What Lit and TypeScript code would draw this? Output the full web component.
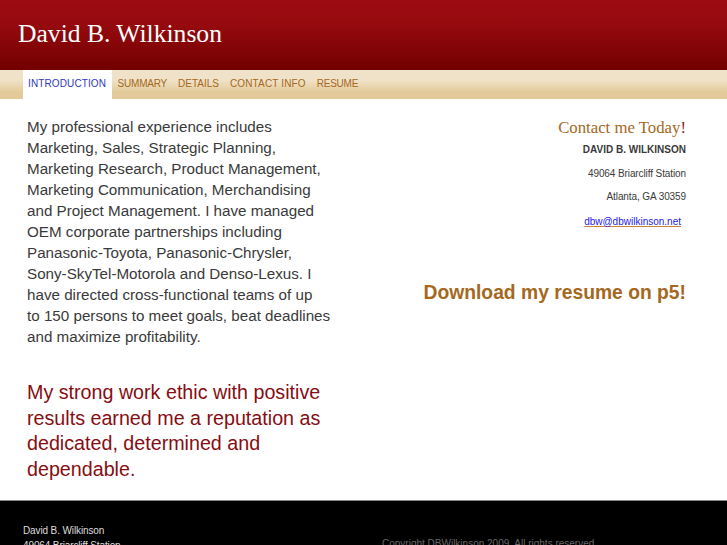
import { LitElement, html, css } from "lit";
import { customElement } from "lit/decorators.js";

@customElement("app-root")
export class AppRoot extends LitElement {
  static styles = css`
    :host { display: flex; flex-direction: column; height: 545px; overflow: hidden; background: #fff; font-family: "Liberation Sans", Arial, sans-serif; }
    .head { flex: none; height: 70px; box-sizing: border-box; padding: 19px 0 0 18px; background: linear-gradient(#9c0b11 0%, #950a0e 35%, #720000 100%); }
    .head h1 { margin: 0; font: 400 25.6px/30px "Liberation Serif", serif; color: #fff; }
    .nav { flex: none; height: 29px; display: flex; padding-left: 23px; background: linear-gradient(#f0e2c8 0%, #f0e2c8 35%, #e3ca9a 75%, #e3ca9a 100%); }
    .nav a { padding: 0 5.5px; font-size: 10px; line-height: 27px; color: #a5681c; text-decoration: none; }
    .nav a.on { background: #fff; color: #3038b8; padding: 0 6px 0 5px; letter-spacing: 0.12px; }
    .nav a.tight { letter-spacing: -0.22px; }
    .nav a.wide { letter-spacing: 0.14px; }
    .main { flex: 1; display: flex; justify-content: space-between; padding: 17px 41px 0 27px; min-height: 0; }
    .left { width: 308px; }
    .left p { margin: 0; font-size: 15.2px; line-height: 21px; color: #3a3a3a; }
    .left p.big { margin-top: 33px; font-size: 19.7px; line-height: 25.5px; color: #860d12; }
    .right { width: 300px; text-align: right; padding-top: 2px; }
    .right h2 { margin: 0 0 1px; font: 400 16.75px/20px "Liberation Serif", serif; color: #a5681c; }
    .right h2 span { color: #8e1a14; }
    .right p { margin: 0; font-size: 10px; letter-spacing: -0.1px; line-height: 23.8px; color: #3a3a3a; }
    .right p.name { font-weight: 700; letter-spacing: 0; line-height: 22.5px; }
    .right p.mail { margin-top: 1px; letter-spacing: 0; }
    .right a { color: #2222ee; margin-right: 5px; text-decoration-color: #c8863c; }
    .right p.dl { margin-top: 47px; font-size: 19.3px; letter-spacing: 0; line-height: 24px; font-weight: 700; color: #a5681c; }
    .foot { flex: none; height: 45px; box-sizing: border-box; border-top: 1px solid #888; background: #000; display: flex; padding: 22px 0 0 23px; font-size: 10px; letter-spacing: -0.12px; line-height: 15px; color: #ddd; }
    .foot .addr { width: 359px; }
    .foot .copy { letter-spacing: 0; color: #666; padding-top: 13px; }
  `;
  render() {
    return html`
      <div class="head"><h1>David B. Wilkinson</h1></div>
      <nav class="nav">
        <a class="on" href="#">INTRODUCTION</a><a class="tight" href="#">SUMMARY</a><a href="#">DETAILS</a><a class="wide" href="#">CONTACT INFO</a><a class="tight" href="#">RESUME</a>
      </nav>
      <main class="main">
        <section class="left">
          <p>My professional experience includes Marketing, Sales, Strategic Planning, Marketing Research, Product Management, Marketing Communication, Merchandising and Project Management. I have managed OEM corporate partnerships including Panasonic-Toyota, Panasonic-Chrysler, Sony-SkyTel-Motorola and Denso-Lexus. I have directed cross-functional teams of up<br />to 150 persons to meet goals, beat deadlines and maximize profitability.</p>
          <p class="big">My strong work ethic with positive results earned me a reputation as dedicated, determined and dependable.</p>
        </section>
        <aside class="right">
          <h2>Contact me Today<span>!</span></h2>
          <p class="name">DAVID B. WILKINSON</p>
          <p>49064 Briarcliff Station</p>
          <p>Atlanta, GA 30359</p>
          <p class="mail"><a href="#">dbw@dbwilkinson.net</a></p>
          <p class="dl">Download my resume on p5!</p>
        </aside>
      </main>
      <footer class="foot">
        <div class="addr">David B. Wilkinson<br />49064 Briarcliff Station</div>
        <div class="copy">Copyright DBWilkinson 2009. All rights reserved.</div>
      </footer>
    `;
  }
}
